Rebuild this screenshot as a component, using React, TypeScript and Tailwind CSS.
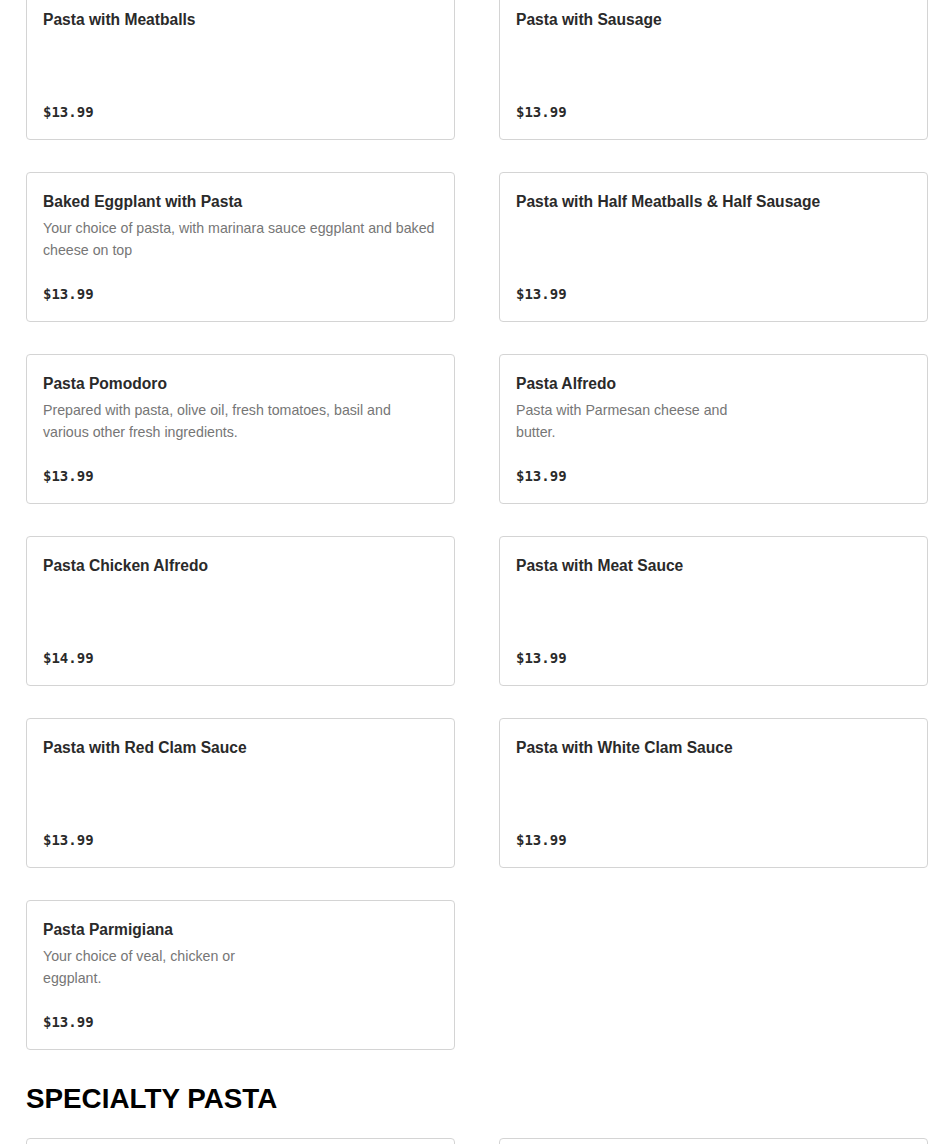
import React from "react";

type Item = { name: string; desc?: React.ReactNode; price: string };

const items: Item[] = [
  { name: "Pasta with Meatballs", price: "$13.99" },
  { name: "Pasta with Sausage", price: "$13.99" },
  {
    name: "Baked Eggplant with Pasta",
    desc: "Your choice of pasta, with marinara sauce eggplant and baked cheese on top",
    price: "$13.99",
  },
  { name: "Pasta with Half Meatballs & Half Sausage", price: "$13.99" },
  {
    name: "Pasta Pomodoro",
    desc: "Prepared with pasta, olive oil, fresh tomatoes, basil and various other fresh ingredients.",
    price: "$13.99",
  },
  {
    name: "Pasta Alfredo",
    desc: (
      <>
        Pasta with Parmesan cheese and
        <br />
        butter.
      </>
    ),
    price: "$13.99",
  },
  { name: "Pasta Chicken Alfredo", price: "$14.99" },
  { name: "Pasta with Meat Sauce", price: "$13.99" },
  { name: "Pasta with Red Clam Sauce", price: "$13.99" },
  { name: "Pasta with White Clam Sauce", price: "$13.99" },
  {
    name: "Pasta Parmigiana",
    desc: (
      <>
        Your choice of veal, chicken or
        <br />
        eggplant.
      </>
    ),
    price: "$13.99",
  },
];

const MenuCard: React.FC<{ item: Item }> = ({ item }) => (
  <div className="h-[150px] flex flex-col rounded border border-[#d4d4d4] bg-white px-4 pt-4 pb-4">
    <h3 className="text-[15.6px] leading-[26px] font-semibold text-[#2a2a2a]">{item.name}</h3>
    {item.desc && (
      <p className="mt-[2px] text-[14.2px] leading-[22px] text-[#767676]">{item.desc}</p>
    )}
    <div className="mt-auto text-[14px] leading-[22px] font-bold text-[#2a2a2a] font-['DejaVu_Sans_Mono',monospace]">
      {item.price}
    </div>
  </div>
);

export default function App() {
  return (
    <div className="min-h-screen bg-white font-['Liberation_Sans',Arial,sans-serif] overflow-hidden">
      <div className="pl-[26px] -mt-[10px]">
        <div className="grid grid-cols-[429px_429px] gap-x-[44px] gap-y-8">
          {items.map((it) => (
            <MenuCard key={it.name} item={it} />
          ))}
        </div>
        <h2 className="mt-[33px] text-[27.8px] leading-8 font-black text-black uppercase">
          Specialty Pasta
        </h2>
        <div className="mt-[23px] grid grid-cols-[429px_429px] gap-x-[44px] gap-y-8">
          <div className="h-[150px] rounded border border-[#d4d4d4]" />
          <div className="h-[150px] rounded border border-[#d4d4d4]" />
        </div>
      </div>
    </div>
  );
}
